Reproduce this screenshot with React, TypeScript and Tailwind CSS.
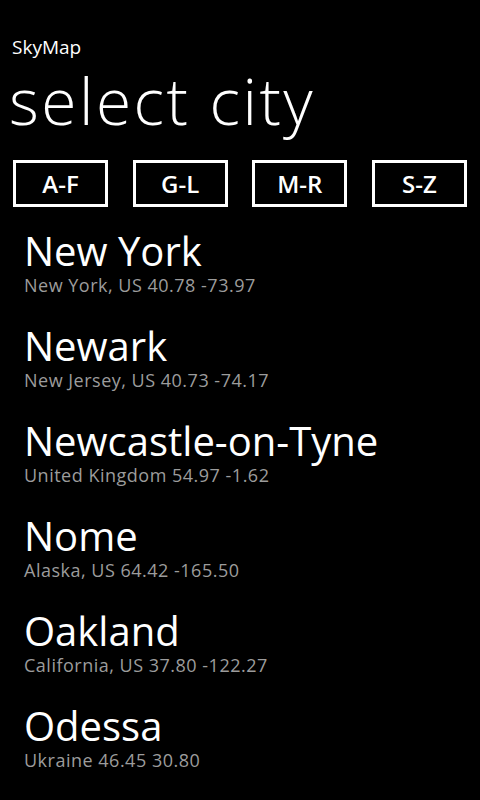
const cities = [
  { name: "New York", detail: "New York, US 40.78 -73.97" },
  { name: "Newark", detail: "New Jersey, US 40.73 -74.17" },
  { name: "Newcastle-on-Tyne", detail: "United Kingdom 54.97 -1.62" },
  { name: "Nome", detail: "Alaska, US 64.42 -165.50" },
  { name: "Oakland", detail: "California, US 37.80 -122.27" },
  { name: "Odessa", detail: "Ukraine 46.45 30.80" },
];

const ranges = ["A-F", "G-L", "M-R", "S-Z"];

export default function App() {
  return (
    <div className="w-[480px] h-[800px] overflow-hidden bg-black text-white font-['Open_Sans',sans-serif]">
      {/* app + page title */}
      <div className="pt-[35px] pl-[12px] text-[19px] leading-[24px]">SkyMap</div>
      <h1 className="mt-[11px] pl-[9px] text-[64px] leading-[62px] font-light tracking-[2.5px]">select city</h1>

      {/* alphabet filters */}
      <div className="mt-[28px] px-[13px] flex justify-between">
        {ranges.map((r) => (
          <button
            key={r}
            className="w-[95px] h-[47px] border-[3px] border-white flex items-center justify-center text-[24px] font-semibold leading-none"
          >
            {r}
          </button>
        ))}
      </div>

      {/* city list */}
      <ul className="mt-[23px] pl-[24px]">
        {cities.map((c) => (
          <li key={c.name} className="h-[95px]">
            <div className="text-[40px] leading-[42px]">{c.name}</div>
            <div className="mt-[2px] text-[18px] leading-[22px] tracking-[0.5px] text-[#9c9c9c]">{c.detail}</div>
          </li>
        ))}
      </ul>
    </div>
  );
}
